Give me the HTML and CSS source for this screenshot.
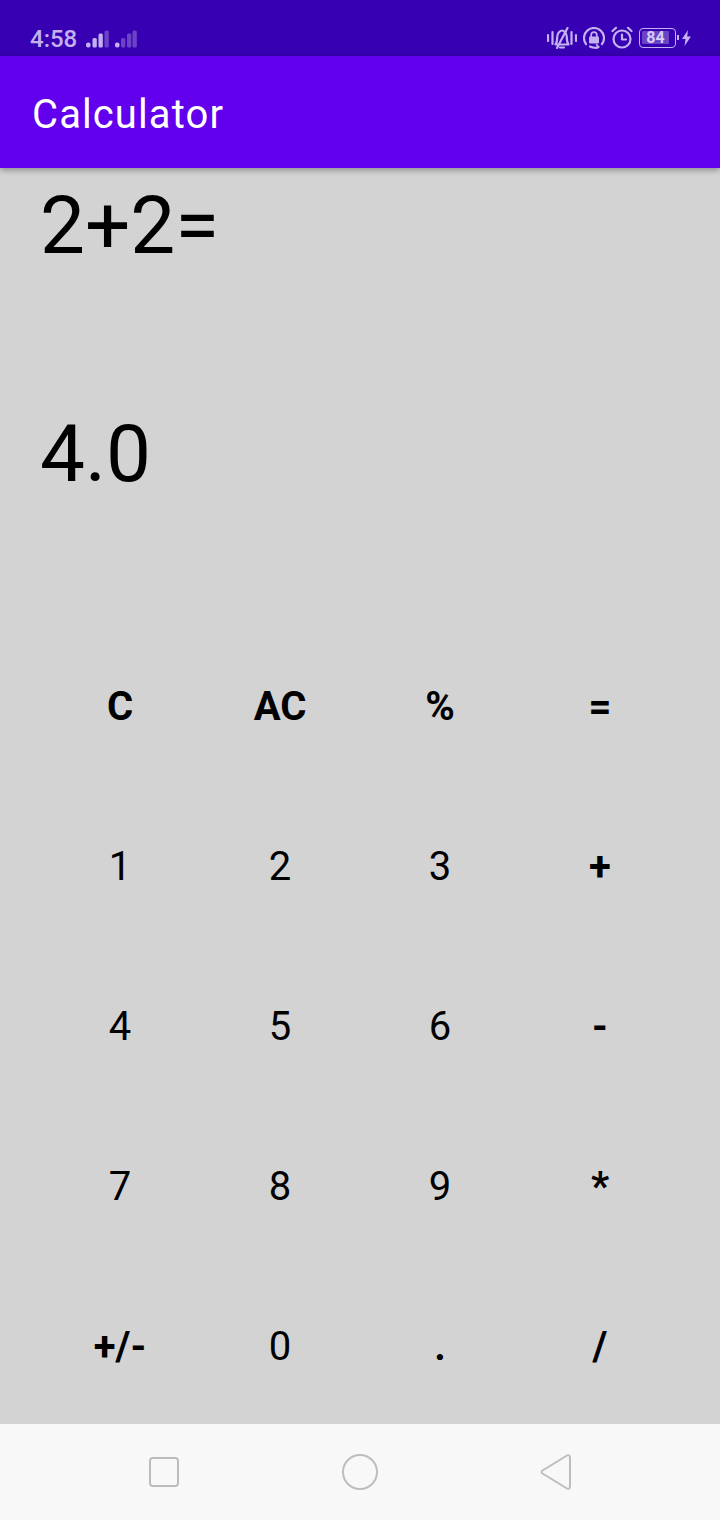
FILE: index.html
```html
<!DOCTYPE html>
<html lang="en">
<head>
  <meta charset="UTF-8" />
  <meta name="viewport" content="width=device-width, initial-scale=1.0" />
  <title>Calculator</title>
  <link rel="stylesheet" href="styles.css">
</head>
<body>
  <div class="status-bar">
    <div class="status-left">
      <span class="time">4:58</span>
      <svg class="signal" width="52" height="18" viewBox="0 0 52 18">
        <rect x="0" y="12.500" width="4.500" height="5" rx="2" fill="#c3b2ef"/>
        <rect x="6.500" y="8" width="4.300" height="9.500" rx="1.500" fill="#c3b2ef"/>
        <rect x="12.500" y="3.500" width="4.300" height="14" rx="1.500" fill="#c3b2ef"/>
        <rect x="18.500" y="0.500" width="4.300" height="17" rx="1.500" fill="#6a43c6"/>
        <rect x="29" y="12.500" width="4.500" height="5" rx="2" fill="#c3b2ef"/>
        <rect x="35" y="8" width="4.300" height="9.500" rx="1.500" fill="#6a43c6"/>
        <rect x="41" y="3.500" width="4.300" height="14" rx="1.500" fill="#6a43c6"/>
        <rect x="46.500" y="0.500" width="4.300" height="17" rx="1.500" fill="#6a43c6"/>
      </svg>
    </div>
    <div class="status-right">
      <!-- vibrate + muted bell -->
      <svg width="30" height="22" viewBox="0 0 30 22" fill="none" stroke="#c3b2ef" stroke-width="2.200" stroke-linecap="round" stroke-linejoin="round">
        <path d="M1 8v6M5.500 5v12M24.500 5v12M29 8v6"/>
        <path d="M8.500 17.500c1.500-2 1.700-4.500 1.700-7.500 0-3 2.300-6.500 4.800-6.500s4.800 3.500 4.800 6.500c0 3 .2 5.500 1.700 7.500z"/>
        <path d="M13 20.500h4M20.500 1L10 21"/>
      </svg>
      <!-- rotation lock -->
      <svg width="22" height="22" viewBox="0 0 22 22" fill="none" stroke="#c3b2ef" stroke-width="2.200" stroke-linecap="round" stroke-linejoin="round">
        <path d="M3 17A10 10 0 1 1 19 17"/>
        <path d="M7 19.500A10 10 0 0 0 15.500 20"/>
        <path d="M13.500 17.500l2 2.500-2.500 1.500" stroke-width="1.500"/>
        <rect x="6" y="9.500" width="10" height="7" rx="1" fill="#c3b2ef" stroke="none"/>
        <path d="M8.200 9.500V8a2.800 2.800 0 0 1 5.600 0v1.500" stroke-width="1.700"/>
      </svg>
      <!-- alarm clock -->
      <svg width="22" height="23" viewBox="0 0 22 23" fill="none" stroke="#c3b2ef" stroke-width="2.200" stroke-linecap="round" stroke-linejoin="round">
        <circle cx="11" cy="13" r="8.500"/>
        <path d="M11 8.500V13.500H15M1.500 5L5 1.800M20.500 5L17 1.800"/>
      </svg>
      <div class="battery-wrap">
        <div class="battery">
          <div class="battery-level">84</div>
        </div>
        <span class="battery-nib"></span>
        <svg class="bolt" width="9" height="16" viewBox="0 0 9 16">
          <path d="M6 0L0 9h3.500L2.500 16 9 6.500H5.200z" fill="#c3b2ef"/>
        </svg>
      </div>
    </div>
  </div>

  <header class="app-bar">Calculator</header>

  <main class="calc">
    <div class="display">
      <div class="display-line">2+2=</div>
      <div class="display-line">4.0</div>
    </div>
    <div class="keypad">
      <button class="key op">C</button>
      <button class="key op">AC</button>
      <button class="key op">%</button>
      <button class="key op">=</button>
      <button class="key">1</button>
      <button class="key">2</button>
      <button class="key">3</button>
      <button class="key op">+</button>
      <button class="key">4</button>
      <button class="key">5</button>
      <button class="key">6</button>
      <button class="key op">-</button>
      <button class="key">7</button>
      <button class="key">8</button>
      <button class="key">9</button>
      <button class="key op">*</button>
      <button class="key op">+/-</button>
      <button class="key">0</button>
      <button class="key op">.</button>
      <button class="key op">/</button>
    </div>
  </main>

  <nav class="nav-bar">
    <svg width="32" height="32" viewBox="0 0 32 32" fill="none" stroke="#bdbdbd" stroke-width="2">
      <rect x="2" y="2" width="28" height="28" rx="3"/>
    </svg>
    <svg width="38" height="38" viewBox="0 0 38 38" fill="none" stroke="#bdbdbd" stroke-width="2">
      <circle cx="19" cy="19" r="17"/>
    </svg>
    <svg width="32" height="38" viewBox="0 0 32 38" fill="none" stroke="#bdbdbd" stroke-width="2" stroke-linejoin="round">
      <path d="M2.500 17.500L27 2.500a2 2 0 0 1 3 1.500v30a2 2 0 0 1-3 1.500L2.500 20.500a1.800 1.800 0 0 1 0-3z"/>
    </svg>
  </nav>
</body>
</html>
```

FILE: styles.css
```css
html, body {
  margin: 0;
  padding: 0;
  height: 100%;
  font-family: Roboto, sans-serif;
  background: #d3d3d3;
  overflow: hidden;
}
body {
  display: flex;
  flex-direction: column;
  height: 1520px;
}

/* Status bar */
.status-bar {
  height: 56px;
  box-sizing: border-box;
  padding: 0 29px 0 30px;
  background: #3700b3;
  color: #c3b2ef;
  display: flex;
  justify-content: space-between;
  align-items: flex-end;
  flex-shrink: 0;
}
.status-left {
  display: flex;
  align-items: flex-end;
  gap: 9px;
  padding-bottom: 3px;
}
.time {
  font-size: 24px;
  font-weight: 500;
  line-height: 28px;
}
.signal {
  margin-bottom: 5px;
}
.status-right {
  display: flex;
  align-items: center;
  gap: 6px;
  padding-bottom: 7px;
}
.battery-wrap {
  display: flex;
  align-items: center;
}
.battery {
  width: 37px;
  height: 20px;
  box-sizing: border-box;
  border: 1.5px solid #c3b2ef;
  border-radius: 4px;
  padding: 2px;
}
.battery-level {
  width: 27px;
  height: 13px;
  background: #6a43c6;
  color: #d9cdf6;
  font-size: 16px;
  font-weight: 700;
  line-height: 13px;
  text-align: center;
  border-radius: 1px;
}
.battery-nib {
  width: 2px;
  height: 5px;
  background: #c3b2ef;
  margin: 0 3px 0 1px;
}

/* App bar */
.app-bar {
  height: 112px;
  box-sizing: border-box;
  padding-left: 32px;
  background: #6200ee;
  color: #fff;
  font-size: 40px;
  line-height: 118px;
  letter-spacing: 1.1px;
  box-shadow: 0 2px 6px rgba(0, 0, 0, 0.35);
  position: relative;
  z-index: 1;
  flex-shrink: 0;
}

/* Calculator */
.calc {
  flex: 1;
  min-height: 0;
  display: flex;
  flex-direction: column;
  overflow: hidden;
}
.display {
  height: 458px;
  box-sizing: border-box;
  padding: 1px 0 0 40px;
  flex-shrink: 0;
}
.display-line {
  height: 228px;
  font-size: 80px;
  line-height: 114px;
  color: #000;
}
.keypad {
  display: grid;
  grid-template-columns: repeat(4, 160px);
  grid-auto-rows: 160px;
  padding-left: 40px;
}
.key {
  border: none;
  background: none;
  padding: 0;
  font-family: Roboto, sans-serif;
  font-size: 40px;
  color: #000;
}
.key.op {
  font-weight: 700;
}

/* Bottom navigation */
.nav-bar {
  height: 96px;
  background: #f8f8f8;
  display: grid;
  grid-template-columns: repeat(3, 196px);
  justify-content: center;
  justify-items: center;
  align-items: center;
  flex-shrink: 0;
  position: relative;
  z-index: 1;
}
```
